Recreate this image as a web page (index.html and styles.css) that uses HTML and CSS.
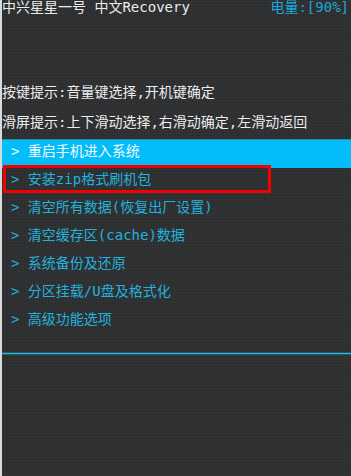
FILE: index.html
```html
<!DOCTYPE html>
<html lang="zh-CN">
<head>
<meta charset="utf-8">
<title>中文Recovery</title>
<link rel="stylesheet" href="styles.css">
</head>
<body>
<div class="screen">
  <header class="status">
    <span class="title">中兴星星一号 中文Recovery</span>
    <span class="battery">电量:[90%]</span>
  </header>
  <div class="hints">
    <p class="hint">按键提示:音量键选择,开机键确定</p>
    <p class="hint">滑屏提示:上下滑动选择,右滑动确定,左滑动返回</p>
  </div>
  <ul class="menu">
    <li class="item selected">&gt; 重启手机进入系统</li>
    <li class="item marked">&gt; 安装zip格式刷机包<span class="mark"></span></li>
    <li class="item">&gt; 清空所有数据(恢复出厂设置)</li>
    <li class="item">&gt; 清空缓存区(cache)数据</li>
    <li class="item">&gt; 系统备份及还原</li>
    <li class="item">&gt; 分区挂载/U盘及格式化</li>
    <li class="item">&gt; 高级功能选项</li>
  </ul>
  <div class="rule"></div>
</div>
</body>
</html>
```
FILE: styles.css
```css
html, body {
  margin: 0;
  padding: 0;
  background: #d9dadb;
}
.screen {
  margin-left: 2px;
  width: 349px;
  height: 476px;
  background-color: #2e2f31;
  background-image:
    repeating-linear-gradient(90deg, rgba(255,255,255,0.015) 0 1px, rgba(0,0,0,0.03) 1px 2px, transparent 2px 3px),
    repeating-linear-gradient(0deg, rgba(255,255,255,0.015) 0 1px, rgba(0,0,0,0.03) 1px 2px, transparent 2px 3px);
  font-family: "DejaVu Sans Mono", "Noto Sans CJK SC", monospace;
  font-size: 14px;
  color: #ececec;
  overflow: hidden;
}
.status {
  display: flex;
  justify-content: space-between;
  height: 14px;
  line-height: 14px;
  padding-right: 2px;
  white-space: pre;
}
.battery {
  color: #1ba8d9;
}
.hints {
  margin-top: 63px;
  border-bottom: 1px solid #2a8aa3;
  height: 62px;
}
.hint {
  margin: 0;
  height: 30px;
  line-height: 30px;
  white-space: pre;
}
.menu {
  list-style: none;
  margin: 0;
  padding: 0;
}
.item {
  position: relative;
  height: 28px;
  line-height: 23px;
  padding-left: 9px;
  color: #22b2de;
  white-space: pre;
  box-sizing: border-box;
}
.item.selected {
  background: #03bdfa;
  color: #f4fbff;
}
.mark {
  position: absolute;
  left: 1px;
  top: -3px;
  width: 262px;
  height: 22px;
  border: 3px solid #f40000;
}
.rule {
  margin-top: 16px;
  height: 1px;
  background: #3bb4d4;
  border-top: 1px solid #155e72;
  border-bottom: 1px solid #155e72;
}
```
